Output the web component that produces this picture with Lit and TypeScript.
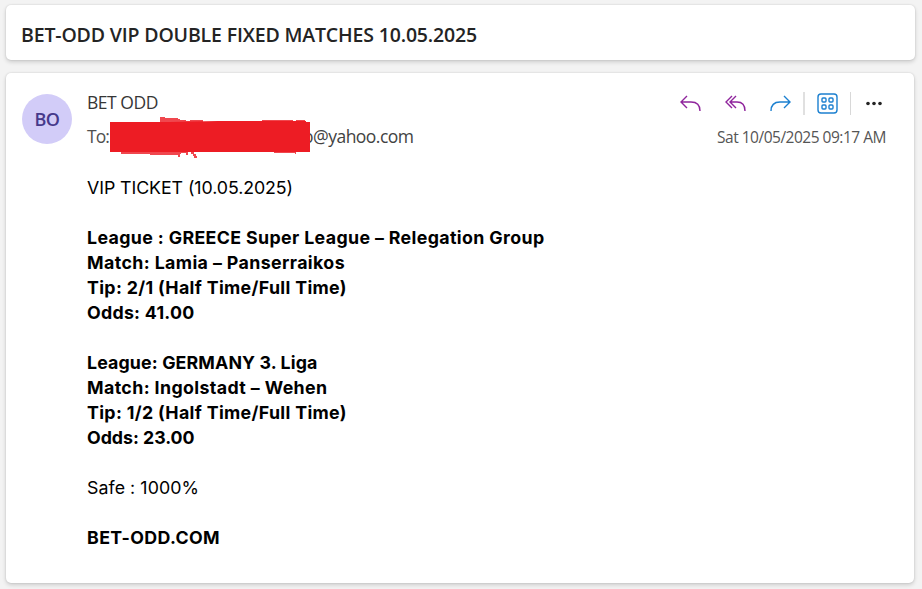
import { LitElement, html, css, svg } from "lit";
import { customElement, property } from "lit/decorators.js";

/** One line of text, tracked so that it takes a given width. */
@customElement("fit-text")
class FitText extends LitElement {
  @property() text = "";
  @property({ type: Number }) width = 0;
  static styles = css`
    :host { display: block; white-space: pre; width: max-content; }
    span { display: inline-block; }
  `;
  render() {
    return html`<span>${this.text}</span>`;
  }
  async updated() {
    const el = this.renderRoot.querySelector("span") as HTMLElement;
    const fit = () => {
      el.style.letterSpacing = "0px";
      const natural = el.getBoundingClientRect().width;
      el.style.letterSpacing = `${(this.width - natural) / this.text.length}px`;
    };
    fit();
    await document.fonts.ready;
    fit();
  }
}

type Line = { text: string; width: number; bold?: boolean };

const BODY: Line[] = [
  { text: "VIP TICKET (10.05.2025)", width: 206 },
  { text: "", width: 0 },
  { text: "League : GREECE Super League – Relegation Group", width: 457.5, bold: true },
  { text: "Match: Lamia – Panserraikos", width: 258, bold: true },
  { text: "Tip: 2/1 (Half Time/Full Time)", width: 259.5, bold: true },
  { text: "Odds: 41.00", width: 107.5, bold: true },
  { text: "", width: 0 },
  { text: "League: GERMANY 3. Liga", width: 230.5, bold: true },
  { text: "Match: Ingolstadt – Wehen", width: 240.5, bold: true },
  { text: "Tip: 1/2 (Half Time/Full Time)", width: 259.5, bold: true },
  { text: "Odds: 23.00", width: 107.5, bold: true },
  { text: "", width: 0 },
  { text: "Safe : 1000%", width: 112 },
  { text: "", width: 0 },
  { text: "BET-ODD.COM", width: 133, bold: true },
];

const reply = svg`<path d="M7 1L1 7L7 13M1 7H11C17 7 20 10.500 20 16"/>`;
const replyAll = svg`<path d="M7 1L1 7L7 13M11 1L5 7L11 13M5 7H12C17.500 7 20 10.500 20 16"/>`;
const forward = svg`<path d="M14 1L20 7L14 13M20 7H10C4 7 1 10.500 1 16"/>`;

@customElement("app-root")
class AppRoot extends LitElement {
  static styles = css`
    :host {
      display: flex; flex-direction: column; gap: 13px; box-sizing: border-box;
      width: 922px; height: 589px; padding: 5px 7px 6px 6px; overflow: hidden;
      background: #f3f3f3; font-family: "Open Sans", "Noto Sans", sans-serif; color: #242424;
    }
    .card {
      background: #fff; border-radius: 5px; box-sizing: border-box; flex: none;
      box-shadow: 0 0 2px rgba(0,0,0,.14), 0 2px 4px rgba(0,0,0,.16);
    }
    .subject { height: 55px; padding: 16px 15px; font-size: 19.500px; font-weight: 600; line-height: 28px; }
    .mail { height: 510px; margin-right: 1px; padding: 17px 28px 0 16px; display: flex; }
    .avatar {
      width: 50px; height: 50px; margin-top: 4px; border-radius: 50%; background: #d2ccf8; color: #46398b;
      display: flex; align-items: center; justify-content: center; font-size: 18px; font-weight: 600;
    }
    .content { margin-left: 15px; flex: 1; }
    .head { display: flex; justify-content: space-between; height: 85px; }
    .from { font-size: 17.500px; line-height: 24px; color: #363636; }
    .to { font-size: 17.500px; line-height: 24px; margin-top: 10px; color: #505050; display: flex; }
    .redaction { display: block; position: relative; z-index: 1; width: 205px; height: 44px; margin: -8px -10px 0 -1px; }
    .domain { color: #424242; }
    .side { display: flex; flex-direction: column; align-items: flex-end; }
    .tools { display: flex; align-items: center; height: 27px; margin-right: 3px; }
    .tools svg { display: block; fill: none; stroke-width: 1.400; }
    .purple { stroke: #8f249c; }
    .blue { stroke: #1c80d0; }
    .rule { width: 1px; height: 23px; background: #d8d8d8; }
    .wide { width: 2px; background: #e0e0e0; }
    .date { font-size: 15.500px; line-height: 22px; margin-top: 9px; color: #555; }
    .line { height: 25px; line-height: 25px; font-family: Inter, sans-serif; font-size: 17.800px; color: #000; }
    .bold { font-weight: 700; }
    .g1 { margin-right: 24px; } .g2 { margin-right: 24px; } .g3 { margin-right: 12px; }
    .g4 { margin: 0 12px; } .g5 { margin-left: 14px; }
  `;

  render() {
    return html`
      <header class="card subject">
        <fit-text text="BET-ODD VIP DOUBLE FIXED MATCHES 10.05.2025" width="456"></fit-text>
      </header>
      <main class="card mail">
        <div class="avatar"><fit-text text="BO" width="25"></fit-text></div>
        <div class="content">
          <div class="head">
            <div>
              <fit-text class="from" text="BET ODD" width="71"></fit-text>
              <div class="to">
                <fit-text text="To:" width="22"></fit-text>
                <svg class="redaction" viewBox="0 0 205 44">
                  <path fill="#f0474e" d="M52 8V1H57V2H70V3H72V4H78V5H82V4H95V6H154V4H185V5H188V4H197V6H200V36H188V38H187V37H166V36H86V38H88V40H89V42H86V40H85V38H83V36H80V39H78V37H73V38H72V41H70V39H42V38H13V30Z"/>
                  <path fill="#ed1c24" d="M2 6H62L110 5H198V6H202V36H2Z"/>
                </svg>
                <fit-text class="domain" text="o@yahoo.com" width="110.5"></fit-text>
              </div>
            </div>
            <div class="side">
              <div class="tools">
                <svg class="purple g1" width="21" height="17">${reply}</svg>
                <svg class="purple g2" width="21" height="17">${replyAll}</svg>
                <svg class="blue g3" width="21" height="17">${forward}</svg>
                <i class="rule wide"></i>
                <svg class="blue g4" width="21" height="21">
                  <rect x="1" y="1" width="19" height="19" rx="3"/>
                  <rect x="5" y="5" width="4" height="4" rx="1"/><rect x="12" y="5" width="4" height="4" rx="1"/>
                  <rect x="5" y="12" width="4" height="4" rx="1"/><rect x="12" y="12" width="4" height="4" rx="1"/>
                </svg>
                <i class="rule"></i>
                <svg class="g5" width="18" height="5">
                  <g fill="#242424"><circle cx="3" cy="2.500" r="1.800"/><circle cx="9" cy="2.500" r="1.800"/><circle cx="15" cy="2.500" r="1.800"/></g>
                </svg>
              </div>
              <fit-text class="date" text="Sat 10/05/2025 09:17 AM" width="169"></fit-text>
            </div>
          </div>
          ${BODY.map((l) => html`<div class="line ${l.bold ? "bold" : ""}">
            ${l.text ? html`<fit-text .text=${l.text} .width=${l.width}></fit-text>` : ""}
          </div>`)}
        </div>
      </main>
    `;
  }
}
